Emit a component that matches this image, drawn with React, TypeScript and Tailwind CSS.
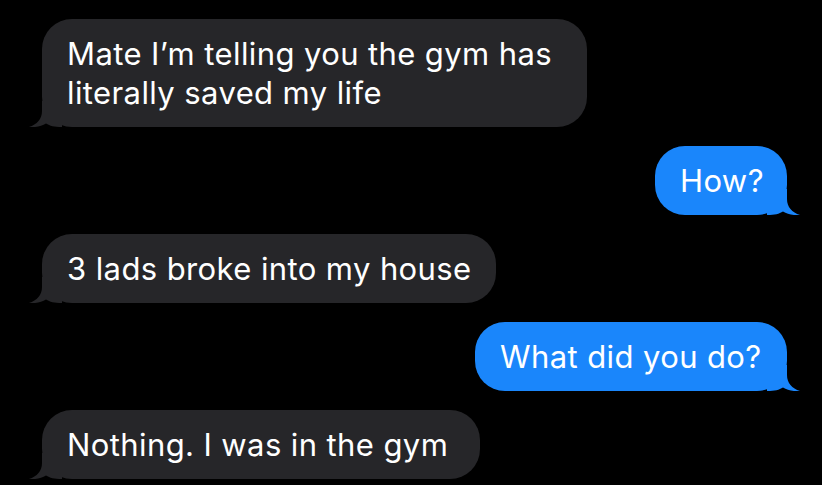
import React from "react";

type Msg = { text: string[]; me: boolean; w: number };

const messages: Msg[] = [
  { text: ["Mate I’m telling you the gym has", "literally saved my life"], me: false, w: 545 },
  { text: ["How?"], me: true, w: 132 },
  { text: ["3 lads broke into my house"], me: false, w: 454 },
  { text: ["What did you do?"], me: true, w: 312 },
  { text: ["Nothing. I was in the gym"], me: false, w: 438 },
];

// cola de la burbuja (estilo iMessage)
function Tail({ me }: { me: boolean }) {
  return (
    <svg
      width="34"
      height="26"
      viewBox="0 0 34 26"
      className={
        me
          ? "absolute bottom-0 -right-[14px] -scale-x-100"
          : "absolute bottom-0 -left-[14px]"
      }
    >
      <path
        d="M14 0 L14 10 C14 18 9 23.5 1 26 C8 26.6 13.5 25.2 18 22.5 C22 25 26 26 34 26 L34 0 Z"
        fill={me ? "#1a86fb" : "#262629"}
      />
    </svg>
  );
}

export default function App() {
  return (
    <div
      className="w-[822px] h-[485px] bg-black overflow-hidden flex flex-col gap-[19px] pt-[19px] pl-[42px] pr-[35px]"
      style={{ fontFamily: "Inter, 'Liberation Sans', sans-serif" }}
    >
      {messages.map((m, i) => (
        <div key={i} className={m.me ? "flex justify-end" : "flex justify-start"}>
          <div
            className={
              (m.me ? "bg-[#1a86fb]" : "bg-[#262629]") +
              " relative rounded-[30px] py-[15px] pl-[25px] text-white text-[31px] leading-[39px] tracking-[0.4px] whitespace-nowrap"
            }
            style={{ width: m.w }}
          >
            {m.text.map((t, j) => (
              <div key={j}>{t}</div>
            ))}
            <Tail me={m.me} />
          </div>
        </div>
      ))}
    </div>
  );
}
